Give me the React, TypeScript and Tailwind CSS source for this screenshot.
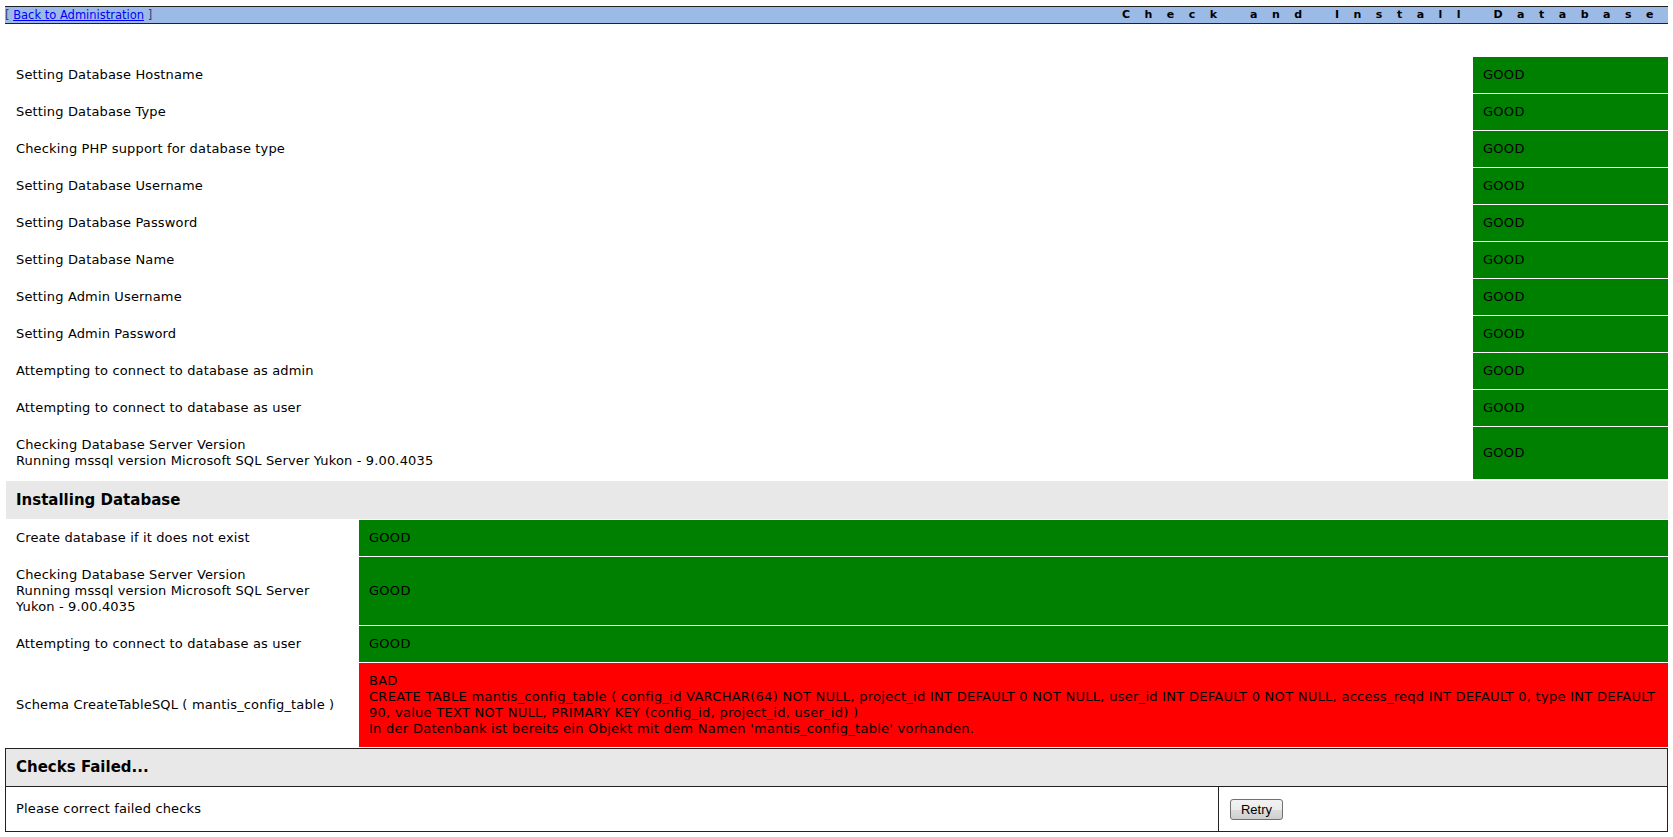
import React from 'react';

type Check = { label: React.ReactNode; status: 'GOOD' | 'BAD'; detail?: React.ReactNode };

const preChecks: Check[] = [
  { label: 'Setting Database Hostname', status: 'GOOD' },
  { label: 'Setting Database Type', status: 'GOOD' },
  { label: 'Checking PHP support for database type', status: 'GOOD' },
  { label: 'Setting Database Username', status: 'GOOD' },
  { label: 'Setting Database Password', status: 'GOOD' },
  { label: 'Setting Database Name', status: 'GOOD' },
  { label: 'Setting Admin Username', status: 'GOOD' },
  { label: 'Setting Admin Password', status: 'GOOD' },
  { label: 'Attempting to connect to database as admin', status: 'GOOD' },
  { label: 'Attempting to connect to database as user', status: 'GOOD' },
  {
    label: (
      <>
        Checking Database Server Version
        <br />
        Running mssql version Microsoft SQL Server Yukon - 9.00.4035
      </>
    ),
    status: 'GOOD',
  },
];

const installChecks: Check[] = [
  { label: 'Create database if it does not exist', status: 'GOOD' },
  {
    label: (
      <>
        Checking Database Server Version
        <br />
        Running mssql version Microsoft SQL Server
        <br />
        Yukon - 9.00.4035
      </>
    ),
    status: 'GOOD',
  },
  { label: 'Attempting to connect to database as user', status: 'GOOD' },
  {
    label: 'Schema CreateTableSQL ( mantis_config_table )',
    status: 'BAD',
    detail: (
      <>
        CREATE TABLE mantis_config_table ( config_id VARCHAR(64) NOT NULL, project_id INT DEFAULT 0 NOT NULL, user_id
        INT DEFAULT 0 NOT NULL, access_reqd INT DEFAULT 0, type INT DEFAULT
        <br />
        90, value TEXT NOT NULL, PRIMARY KEY (config_id, project_id, user_id) )
        <br />
        In der Datenbank ist bereits ein Objekt mit dem Namen 'mantis_config_table' vorhanden.
      </>
    ),
  },
];

function StatusCell({ check, className }: { check: Check; className: string }) {
  const bg = check.status === 'GOOD' ? 'bg-[#008000]' : 'bg-[#ff0000]';
  return (
    <div className={`${className} ${bg} flex items-center px-[10px] py-[10px] text-[13px] leading-[16px] tracking-[0.28px] text-black`}>
      <div>
        {check.status}
        {check.detail && (
          <>
            <br />
            {check.detail}
          </>
        )}
      </div>
    </div>
  );
}

export default function App() {
  return (
    <div className="min-h-[837px] bg-white px-[5px] pt-[6px] font-['DejaVu_Sans',Verdana,sans-serif] text-black">
      {/* title bar */}
      <div className="flex h-[18px] items-center justify-between border-y border-[#222] bg-[#9cbae6] leading-[16px]">
        <span className="text-[11.5px] text-[#23427a]">
          [ <a href="#" className="text-[#0000ff] underline">Back to Administration</a> ]
        </span>
        <span className="text-[11px] font-bold tracking-[14.5px]">Check and Install Database</span>
      </div>

      {/* pre-install checks */}
      <div className="mt-[33px] flex flex-col gap-[1px]">
        {preChecks.map((c, i) => (
          <div key={i} className="flex">
            <div className="flex flex-1 items-center py-[10px] pl-[11px] text-[13px] leading-[16px] tracking-[0.15px]">
              <div>{c.label}</div>
            </div>
            <StatusCell check={c} className="w-[195px]" />
          </div>
        ))}
      </div>

      <div className="ml-[1px] mt-[2px] flex h-[38px] items-center bg-[#e8e8e8] pl-[10px] text-[15px] font-bold">
        Installing Database
      </div>

      {/* install steps */}
      <div className="mt-[1px] flex flex-col gap-[1px]">
        {installChecks.map((c, i) => (
          <div key={i} className="flex">
            <div className="flex w-[354px] items-center py-[10px] pl-[11px] text-[13px] leading-[16px] tracking-[0.15px]">
              <div>{c.label}</div>
            </div>
            <StatusCell check={c} className="flex-1" />
          </div>
        ))}
      </div>

      {/* result */}
      <div className="mt-[1px] border border-[#222]">
        <div className="flex h-[38px] items-center border-b border-[#222] bg-[#e8e8e8] pl-[10px] text-[15px] font-bold">
          Checks Failed...
        </div>
        <div className="flex h-[44px]">
          <div className="flex w-[1213px] items-center border-r border-[#222] pl-[10px] text-[13px] tracking-[0.15px]">
            Please correct failed checks
          </div>
          <div className="flex flex-1 items-center pl-[11px]">
            <button className="h-[21px] w-[53px] rounded-[3px] border border-[#707070] bg-[linear-gradient(#f2f2f2_0%,#ebebeb_50%,#dddddd_51%,#cfcfcf_100%)] font-['Liberation_Sans',Arial,sans-serif] text-[13px] leading-[19px] text-black">
              Retry
            </button>
          </div>
        </div>
      </div>
    </div>
  );
}
